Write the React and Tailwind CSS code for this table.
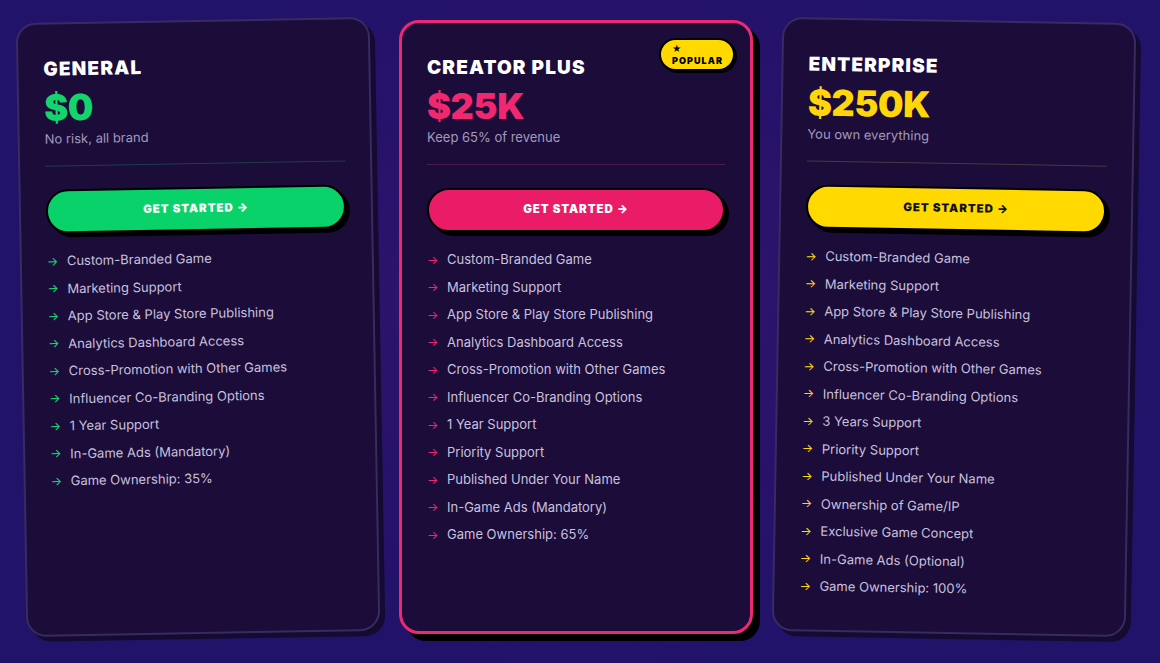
import React from "react";

const plans = [
  {
    name: "GENERAL",
    price: "$0",
    note: "No risk, all brand",
    accent: "text-[#14d46c]",
    arrow: "text-[#14d46c]",
    divider: "bg-[#1f3d4a]",
    button: "bg-[#0ad26a] text-white",
    card: "-rotate-1 border-2 border-[#392b62] shadow-[5px_5px_0_#150a30]",
    features: [
      "Custom-Branded Game",
      "Marketing Support",
      "App Store & Play Store Publishing",
      "Analytics Dashboard Access",
      "Cross-Promotion with Other Games",
      "Influencer Co-Branding Options",
      "1 Year Support",
      "In-Game Ads (Mandatory)",
      "Game Ownership: 35%",
    ],
  },
  {
    name: "CREATOR PLUS",
    price: "$25K",
    note: "Keep 65% of revenue",
    accent: "text-[#f0286f]",
    arrow: "text-[#f0286f]",
    divider: "bg-[#4a1a4e]",
    button: "bg-[#ea1c68] text-white",
    card: "border-[3px] border-[#ec2a73] shadow-[7px_7px_0_#000]",
    popular: true,
    features: [
      "Custom-Branded Game",
      "Marketing Support",
      "App Store & Play Store Publishing",
      "Analytics Dashboard Access",
      "Cross-Promotion with Other Games",
      "Influencer Co-Branding Options",
      "1 Year Support",
      "Priority Support",
      "Published Under Your Name",
      "In-Game Ads (Mandatory)",
      "Game Ownership: 65%",
    ],
  },
  {
    name: "ENTERPRISE",
    price: "$250K",
    note: "You own everything",
    accent: "text-[#ffd60a]",
    arrow: "text-[#ffd60a]",
    divider: "bg-[#4a3a3c]",
    button: "bg-[#ffd900] text-[#111]",
    card: "rotate-1 border-2 border-[#392b62] shadow-[5px_5px_0_#150a30]",
    features: [
      "Custom-Branded Game",
      "Marketing Support",
      "App Store & Play Store Publishing",
      "Analytics Dashboard Access",
      "Cross-Promotion with Other Games",
      "Influencer Co-Branding Options",
      "3 Years Support",
      "Priority Support",
      "Published Under Your Name",
      "Ownership of Game/IP",
      "Exclusive Game Concept",
      "In-Game Ads (Optional)",
      "Game Ownership: 100%",
    ],
  },
];

function PlanCard({ plan }) {
  return (
    <div
      className={`relative w-[354px] h-[614px] shrink-0 rounded-[20px] bg-[#1b0c3a] px-[25px] pt-[31px] ${plan.card}`}
    >
      {plan.popular && (
        <div className="absolute top-[15px] right-[15px] w-[76px] h-[33px] rounded-full bg-[#ffd900] border-2 border-black shadow-[2px_2px_0_#000] flex flex-col items-start pl-[11px] pt-[4px]">
          <span className="block h-[10px] text-[9px] leading-[10px] text-black">★</span>
          <span className="block mt-[2px] text-[9px] leading-[10px] font-black tracking-[0.12em] text-black">
            POPULAR
          </span>
        </div>
      )}
      <h2 className="text-[19px] leading-[28px] font-black tracking-[0.06em] text-white">
        {plan.name}
      </h2>
      <div className={`mt-[4px] text-[36px] leading-[40px] font-black tracking-[-0.01em] ${plan.accent}`}>
        {plan.price}
      </div>
      <p className="mt-[2px] text-[13px] leading-[18px] text-[#a39abb]">{plan.note}</p>
      <div className={`mt-[18px] h-px ${plan.divider}`} />
      <button
        className={`mt-[23px] w-full h-[44px] rounded-full border-2 border-black shadow-[4px_4px_0_#000] text-[11.5px] font-black tracking-[0.08em] ${plan.button}`}
      >
        GET STARTED →
      </button>
      <ul className="mt-[14px]">
        {plan.features.map((f) => (
          <li key={f} className="flex items-center h-[27.5px] text-[13px] text-[#c9c1dd]">
            <span className={`w-[12px] text-[12px] ${plan.arrow}`}>→</span>
            <span className="ml-[8px]">{f}</span>
          </li>
        ))}
      </ul>
    </div>
  );
}

export default function App() {
  return (
    <div
      className="w-[1160px] h-[663px] overflow-hidden bg-[radial-gradient(ellipse_45%_60%_at_50%_45%,#33166f_0%,#27126a_55%,#21136a_100%)]"
      style={{ fontFamily: "Inter, 'Noto Sans', sans-serif" }}
    >
      <div className="flex items-start gap-[24px] pl-[21px] pt-[20px]">
        {plans.map((p) => (
          <PlanCard key={p.name} plan={p} />
        ))}
      </div>
    </div>
  );
}
